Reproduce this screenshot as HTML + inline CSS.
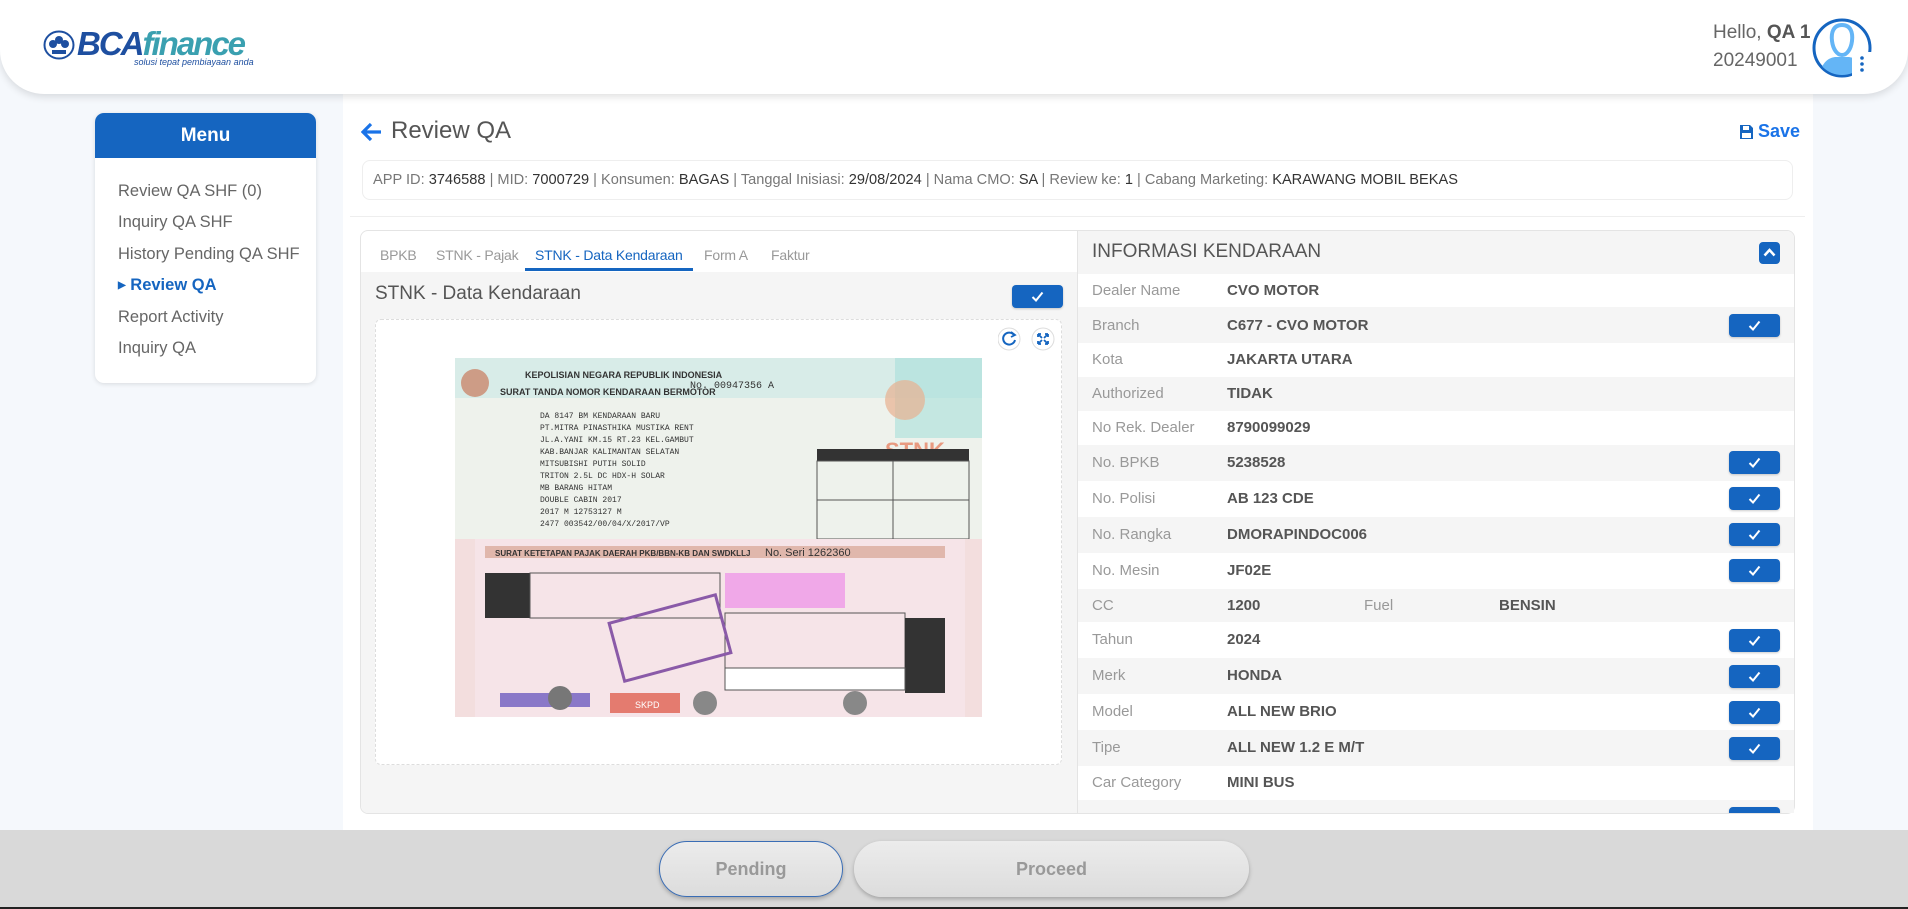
<!DOCTYPE html>
<html><head><meta charset="utf-8"><style>
*{box-sizing:border-box;margin:0;padding:0}
body{width:1908px;height:909px;overflow:hidden;background:#f5f8fc;font-family:"Liberation Sans",sans-serif;position:relative}
.a{position:absolute}
.hdr{left:0;top:0;width:1908px;height:94px;background:#fff;border-radius:0 0 44px 44px;box-shadow:0 3px 8px rgba(0,0,0,.12);z-index:3}
.main{left:343px;top:94px;width:1470px;height:740px;background:#fff}
.menu{left:95px;top:113px;width:221px;height:270px;background:#fff;border-radius:9px;box-shadow:0 1px 5px rgba(0,0,0,.12);overflow:hidden}
.menu .h{height:45px;background:#1565c0;color:#fff;font-size:19px;font-weight:bold;text-align:center;line-height:45px}
.mi{position:absolute;left:23px;font-size:16.5px;color:#666}
.chk{position:absolute;width:51px;height:23px;background:#1565c0;border-radius:4px;box-shadow:0 1px 2px rgba(0,0,0,.2)}
.chk svg{position:absolute;left:19px;top:6px}
.row{position:absolute;left:1078px;width:717px;font-size:15px}
.row .l{position:absolute;left:14px;color:#999}
.row .v{position:absolute;left:149px;color:#555;font-weight:bold}
.tab{position:absolute;top:247px;font-size:14px;color:#999;letter-spacing:-.2px}
</style></head><body>
<div class="a hdr">
  <svg class="a" style="left:43px;top:30px" width="32" height="30" viewBox="0 0 32 30"><ellipse cx="16" cy="15" rx="14.5" ry="13.5" fill="#fff" stroke="#1e4fa0" stroke-width="2"/><circle cx="16" cy="10" r="4" fill="#1e4fa0"/><circle cx="10" cy="14" r="4" fill="#1e4fa0"/><circle cx="22" cy="14" r="4" fill="#1e4fa0"/><rect x="9" y="20" width="14" height="4" fill="#1e4fa0"/></svg>
  <div class="a" style="left:77px;top:25px;font-size:33px;font-weight:bold;font-style:italic;letter-spacing:-2px;color:#1e4fa0">BCA<span style="color:#3aa0b0">finance</span></div>
  <div class="a" style="left:134px;top:57px;font-size:9px;font-style:italic;color:#1e4fa0">solusi tepat pembiayaan anda</div>
  <div class="a" style="left:1713px;top:22px;font-size:19px;color:#666">Hello, <b style="color:#555">QA 1</b></div>
  <div class="a" style="left:1713px;top:50px;font-size:19px;color:#666">20249001</div>
  <svg class="a" style="left:1811px;top:17px" width="62" height="62" viewBox="0 0 62 62"><defs><clipPath id="c"><circle cx="31" cy="31" r="27"/></clipPath></defs><circle cx="31" cy="31" r="28" fill="#fff" stroke="#1565c0" stroke-width="3"/><g clip-path="url(#c)"><path d="M8 62 Q10 42 24 40 L38 40 Q52 42 54 62Z" fill="#64b5f6"/><path d="M31 8 C22 8 20 16 21 24 C22 32 26 38 31 38 C36 38 40 32 41 24 C42 16 40 8 31 8Z" fill="none" stroke="#64b5f6" stroke-width="4"/></g><rect x="41" y="35" width="20" height="25" fill="#fff"/><circle cx="51" cy="41" r="1.8" fill="#1565c0"/><circle cx="51" cy="47" r="1.8" fill="#1565c0"/><circle cx="51" cy="53" r="1.8" fill="#1565c0"/></svg>
</div>
<div class="a main"></div>
<div class="a menu"><div class="h">Menu</div>
  <div class="mi" style="top:69px">Review QA SHF (0)</div>
  <div class="mi" style="top:100px">Inquiry QA SHF</div>
  <div class="mi" style="top:132px">History Pending QA SHF</div>
  <div class="mi" style="top:163px;color:#1565c0;font-weight:bold"><span style="font-size:10px;position:relative;top:-2px">&#9654;</span> Review QA</div>
  <div class="mi" style="top:195px">Report Activity</div>
  <div class="mi" style="top:226px">Inquiry QA</div>
</div>
<svg class="a" style="left:361px;top:122px" width="22" height="20" viewBox="0 0 22 20"><path d="M20 10H3M10 2L2 10L10 18" fill="none" stroke="#1a73e8" stroke-width="3.2"/></svg>
<div class="a" style="left:391px;top:117px;font-size:24px;color:#555">Review QA</div>
<svg class="a" style="left:1740px;top:125px" width="13" height="14" viewBox="0 0 13 14"><path d="M0 0H10L13 3V14H0Z" fill="#1565c0"/><rect x="3" y="1" width="6" height="4" fill="#fff"/><rect x="2" y="8" width="9" height="5" fill="#fff"/></svg>
<div class="a" style="left:1758px;top:121px;font-size:18px;color:#1a73e8;font-weight:bold">Save</div>
<div class="a" style="left:362px;top:160px;width:1431px;height:40px;border:1px solid #eee;border-radius:8px;background:#fff"></div>
<div class="a" style="left:373px;top:172px;font-size:14.6px;color:#777;white-space:nowrap">APP ID: <span style="color:#333">3746588</span> | MID: <span style="color:#333">7000729</span> | Konsumen: <span style="color:#333">BAGAS</span> | Tanggal Inisiasi: <span style="color:#333">29/08/2024</span> | Nama CMO: <span style="color:#333">SA</span> | Review ke: <span style="color:#333">1</span> | Cabang Marketing: <span style="color:#333">KARAWANG MOBIL BEKAS</span></div>
<div class="a" style="left:350px;top:216px;width:1455px;height:1px;background:#eee"></div>
<!-- card -->
<div class="a" style="left:360px;top:230px;width:1435px;height:584px;border:1px solid #e4e4e4;border-radius:8px;background:#fff;overflow:hidden">
  <div class="a" style="left:0;top:41px;width:717px;height:543px;background:#f5f5f5"></div>
  <div class="a" style="left:716px;top:0;width:1px;height:584px;background:#e4e4e4"></div>
  <div class="a" style="left:717px;top:0;width:718px;height:44px;background:#f5f5f5"></div>
</div>
<div class="tab" style="left:380px">BPKB</div>
<div class="tab" style="left:436px">STNK - Pajak</div>
<div class="tab" style="left:535px;color:#1565c0">STNK - Data Kendaraan</div>
<div class="a" style="left:525px;top:268px;width:168px;height:3px;background:#1565c0"></div>
<div class="tab" style="left:704px">Form A</div>
<div class="tab" style="left:771px">Faktur</div>
<div class="a" style="left:375px;top:283px;font-size:19px;color:#555">STNK - Data Kendaraan</div>
<div class="chk" style="left:1012px;top:285px"><svg width="13" height="11" viewBox="0 0 13 11"><path d="M1.5 6L5 9.5L11.5 1.5" fill="none" stroke="#fff" stroke-width="2"/></svg></div>
<div class="a" style="left:375px;top:319px;width:687px;height:446px;background:#fff;border:1px dashed #ddd;border-radius:6px"></div>
<svg class="a" style="left:998px;top:327px" width="60" height="24" viewBox="0 0 60 24"><circle cx="11" cy="12" r="11" fill="#fff" stroke="#ddd"/><path d="M16 8A6 6 0 1 0 17 13" fill="none" stroke="#1565c0" stroke-width="2"/><path d="M13 5L17 8L13 10" fill="none" stroke="#1565c0" stroke-width="1.8"/><circle cx="45" cy="12" r="11" fill="#fff" stroke="#ddd"/><path d="M40 7L44 11M50 7L46 11M40 17L44 13M50 17L46 13M40 7v3M40 7h3M50 7v3M50 7h-3M40 17v-3M40 17h3M50 17v-3M50 17h-3" stroke="#1565c0" stroke-width="1.8" fill="none"/></svg>
<svg class="a" style="left:455px;top:358px" width="527" height="359" viewBox="0 0 527 359">
  <rect x="0" y="0" width="527" height="181" fill="#eef2ec"/><rect x="0" y="0" width="527" height="40" fill="#d8ece8"/><rect x="440" y="0" width="87" height="80" fill="#a8e0da" opacity=".6"/>
  <circle cx="20" cy="25" r="14" fill="#c97a5c" opacity=".7"/><circle cx="450" cy="42" r="20" fill="#e8b090" opacity=".7"/><text x="430" y="100" font-size="22" font-weight="bold" fill="#e89a80">STNK</text>
  <text x="70" y="20" font-size="9" font-weight="bold" fill="#333">KEPOLISIAN NEGARA REPUBLIK INDONESIA</text>
  <text x="45" y="37" font-size="9" font-weight="bold" fill="#333">SURAT TANDA NOMOR KENDARAAN BERMOTOR</text>
  <text x="235" y="30" font-size="10" font-family="Liberation Mono" fill="#333">No. 00947356 A</text>
  <g font-family="Liberation Mono" font-size="8" fill="#333"><text x="85" y="60">DA 8147 BM        KENDARAAN BARU</text><text x="85" y="72">PT.MITRA PINASTHIKA MUSTIKA RENT</text><text x="85" y="84">JL.A.YANI KM.15 RT.23 KEL.GAMBUT</text><text x="85" y="96">KAB.BANJAR KALIMANTAN SELATAN</text><text x="85" y="108">MITSUBISHI           PUTIH SOLID</text><text x="85" y="120">TRITON 2.5L DC HDX-H  SOLAR</text><text x="85" y="132">MB BARANG            HITAM</text><text x="85" y="144">DOUBLE CABIN         2017</text><text x="85" y="156">2017                 M 12753127 M</text><text x="85" y="168">2477          003542/00/04/X/2017/VP</text></g>
  <rect x="362" y="91" width="152" height="12" fill="#333"/><rect x="362" y="103" width="152" height="78" fill="none" stroke="#555"/><line x1="438" y1="103" x2="438" y2="181" stroke="#555"/><line x1="362" y1="142" x2="514" y2="142" stroke="#555"/>
  <rect x="0" y="181" width="527" height="178" fill="#f3dede"/><rect x="20" y="181" width="490" height="178" fill="#f6e4e8"/>
  <rect x="30" y="188" width="460" height="12" fill="#c98a70" opacity=".5"/><text x="40" y="198" font-size="8" font-weight="bold" fill="#333">SURAT KETETAPAN PAJAK DAERAH PKB/BBN-KB DAN SWDKLLJ</text><text x="310" y="198" font-size="11" fill="#333">No. Seri 1262360</text>
  <rect x="30" y="215" width="45" height="45" fill="#333"/><rect x="75" y="215" width="190" height="45" fill="none" stroke="#555"/>
  <rect x="270" y="215" width="120" height="35" fill="#f0a8e8"/><rect x="270" y="255" width="180" height="75" fill="none" stroke="#555"/><rect x="450" y="260" width="40" height="75" fill="#333"/>
  <rect x="270" y="310" width="180" height="22" fill="#fff" stroke="#555"/><rect x="160" y="250" width="110" height="60" fill="none" stroke="#8a5aa8" stroke-width="3" transform="rotate(-15 215 280)"/>
  <rect x="45" y="335" width="90" height="14" fill="#8a78c8"/><rect x="155" y="335" width="70" height="20" fill="#e06050" opacity=".8"/><text x="180" y="350" font-size="9" fill="#fff">SKPD</text>
  <circle cx="105" cy="340" r="12" fill="#777"/><circle cx="250" cy="345" r="12" fill="#888"/><circle cx="400" cy="345" r="12" fill="#888"/>
</svg>
<div class="a" style="left:1092px;top:241px;font-size:19px;color:#555">INFORMASI KENDARAAN</div>
<div class="a" style="left:1759px;top:242px;width:21px;height:22px;background:#1565c0;border-radius:4px"><svg class="a" style="left:4px;top:6px" width="13" height="9" viewBox="0 0 13 9"><path d="M1.5 7.5L6.5 2L11.5 7.5" fill="none" stroke="#fff" stroke-width="2.5"/></svg></div>
<div class="a" style="left:1078px;top:274px;width:716px;height:539px;overflow:hidden">
<div style="position:absolute;left:-1078px;top:-274px;width:1908px;height:900px">
<div class="row" style="top:274px;height:33px;background:#fff"><span class="l" style="top:8px">Dealer Name</span><span class="v" style="top:8px">CVO MOTOR</span></div>
<div class="row" style="top:307px;height:36px;background:#f5f5f5"><span class="l" style="top:10px">Branch</span><span class="v" style="top:10px">C677 - CVO MOTOR</span></div>
<div class="row" style="top:343px;height:34px;background:#fff"><span class="l" style="top:8px">Kota</span><span class="v" style="top:8px">JAKARTA UTARA</span></div>
<div class="row" style="top:377px;height:34px;background:#f5f5f5"><span class="l" style="top:8px">Authorized</span><span class="v" style="top:8px">TIDAK</span></div>
<div class="row" style="top:411px;height:34px;background:#fff"><span class="l" style="top:8px">No Rek. Dealer</span><span class="v" style="top:8px">8790099029</span></div>
<div class="row" style="top:445px;height:36px;background:#f5f5f5"><span class="l" style="top:9px">No. BPKB</span><span class="v" style="top:9px">5238528</span></div>
<div class="row" style="top:481px;height:36px;background:#fff"><span class="l" style="top:9px">No. Polisi</span><span class="v" style="top:9px">AB 123 CDE</span></div>
<div class="row" style="top:517px;height:36px;background:#f5f5f5"><span class="l" style="top:9px">No. Rangka</span><span class="v" style="top:9px">DMORAPINDOC006</span></div>
<div class="row" style="top:553px;height:36px;background:#fff"><span class="l" style="top:9px">No. Mesin</span><span class="v" style="top:9px">JF02E</span></div>
<div class="row" style="top:589px;height:33px;background:#f5f5f5"><span class="l" style="top:8px">CC</span><span class="v" style="top:8px">1200</span><span class="l" style="top:8px;left:286px">Fuel</span><span class="v" style="top:8px;left:421px">BENSIN</span></div>
<div class="row" style="top:622px;height:36px;background:#fff"><span class="l" style="top:9px">Tahun</span><span class="v" style="top:9px">2024</span></div>
<div class="row" style="top:658px;height:36px;background:#f5f5f5"><span class="l" style="top:9px">Merk</span><span class="v" style="top:9px">HONDA</span></div>
<div class="row" style="top:694px;height:36px;background:#fff"><span class="l" style="top:9px">Model</span><span class="v" style="top:9px">ALL NEW BRIO</span></div>
<div class="row" style="top:730px;height:36px;background:#f5f5f5"><span class="l" style="top:9px">Tipe</span><span class="v" style="top:9px">ALL NEW 1.2 E M/T</span></div>
<div class="row" style="top:766px;height:34px;background:#fff"><span class="l" style="top:8px">Car Category</span><span class="v" style="top:8px">MINI BUS</span></div>
<div class="row" style="top:800px;height:36px;background:#f5f5f5"></div>
<div class="chk" style="left:1729px;top:314px"><svg width="13" height="11" viewBox="0 0 13 11"><path d="M1.5 6L5 9.5L11.5 1.5" fill="none" stroke="#fff" stroke-width="2"/></svg></div>
<div class="chk" style="left:1729px;top:451px"><svg width="13" height="11" viewBox="0 0 13 11"><path d="M1.5 6L5 9.5L11.5 1.5" fill="none" stroke="#fff" stroke-width="2"/></svg></div>
<div class="chk" style="left:1729px;top:487px"><svg width="13" height="11" viewBox="0 0 13 11"><path d="M1.5 6L5 9.5L11.5 1.5" fill="none" stroke="#fff" stroke-width="2"/></svg></div>
<div class="chk" style="left:1729px;top:523px"><svg width="13" height="11" viewBox="0 0 13 11"><path d="M1.5 6L5 9.5L11.5 1.5" fill="none" stroke="#fff" stroke-width="2"/></svg></div>
<div class="chk" style="left:1729px;top:559px"><svg width="13" height="11" viewBox="0 0 13 11"><path d="M1.5 6L5 9.5L11.5 1.5" fill="none" stroke="#fff" stroke-width="2"/></svg></div>
<div class="chk" style="left:1729px;top:629px"><svg width="13" height="11" viewBox="0 0 13 11"><path d="M1.5 6L5 9.5L11.5 1.5" fill="none" stroke="#fff" stroke-width="2"/></svg></div>
<div class="chk" style="left:1729px;top:665px"><svg width="13" height="11" viewBox="0 0 13 11"><path d="M1.5 6L5 9.5L11.5 1.5" fill="none" stroke="#fff" stroke-width="2"/></svg></div>
<div class="chk" style="left:1729px;top:701px"><svg width="13" height="11" viewBox="0 0 13 11"><path d="M1.5 6L5 9.5L11.5 1.5" fill="none" stroke="#fff" stroke-width="2"/></svg></div>
<div class="chk" style="left:1729px;top:737px"><svg width="13" height="11" viewBox="0 0 13 11"><path d="M1.5 6L5 9.5L11.5 1.5" fill="none" stroke="#fff" stroke-width="2"/></svg></div>
<div class="chk" style="left:1729px;top:807px"></div>
</div></div>
<!-- footer -->
<div class="a" style="left:0;top:830px;width:1908px;height:79px;background:#d9d9d9;border-bottom:2px solid #222"></div>
<div class="a" style="left:659px;top:841px;width:184px;height:56px;border-radius:28px;background:linear-gradient(#ececec,#dcdcdc);border:1px solid #3a6db5;box-shadow:0 2px 4px rgba(0,0,0,.25);text-align:center;line-height:54px;font-size:18px;font-weight:bold;color:#999">Pending</div>
<div class="a" style="left:854px;top:841px;width:395px;height:56px;border-radius:28px;background:linear-gradient(#ececec,#dcdcdc);box-shadow:0 2px 4px rgba(0,0,0,.25);text-align:center;line-height:56px;font-size:18px;font-weight:bold;color:#999">Proceed</div>
</body></html>
